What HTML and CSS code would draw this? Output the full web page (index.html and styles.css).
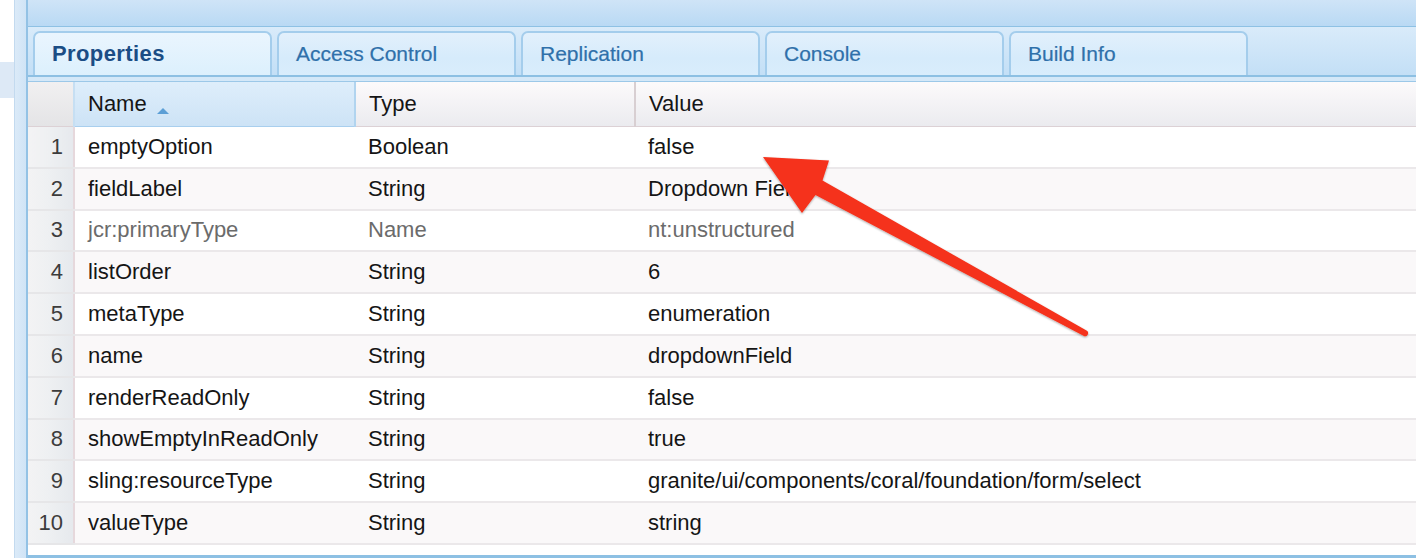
FILE: index.html
```html
<!DOCTYPE html>
<html>
<head>
<meta charset="utf-8">
<link rel="stylesheet" href="styles.css">
</head>
<body>
<div class="page">
  <div class="side"><div class="side-sel"></div></div>
  <div class="frame"></div>
  <div class="main">
    <div class="topbar"></div>
    <div class="tabstrip">
      <div class="tab active">Properties</div>
      <div class="tab">Access Control</div>
      <div class="tab">Replication</div>
      <div class="tab">Console</div>
      <div class="tab">Build Info</div>
    </div>
    <div class="tabbase"></div>
    <div class="gridwrap">
      <table class="grid">
        <thead>
          <tr>
            <th class="num"></th>
            <th class="c-name sorted">Name <span class="sort-up"></span></th>
            <th class="c-type">Type</th>
            <th class="c-value">Value</th>
          </tr>
        </thead>
        <tbody>
          <tr><td class="num">1</td><td>emptyOption</td><td>Boolean</td><td>false</td></tr>
          <tr class="alt"><td class="num">2</td><td>fieldLabel</td><td>String</td><td>Dropdown Field</td></tr>
          <tr class="prot"><td class="num">3</td><td>jcr:primaryType</td><td>Name</td><td>nt:unstructured</td></tr>
          <tr class="alt"><td class="num">4</td><td>listOrder</td><td>String</td><td>6</td></tr>
          <tr><td class="num">5</td><td>metaType</td><td>String</td><td>enumeration</td></tr>
          <tr class="alt"><td class="num">6</td><td>name</td><td>String</td><td>dropdownField</td></tr>
          <tr><td class="num">7</td><td>renderReadOnly</td><td>String</td><td>false</td></tr>
          <tr class="alt"><td class="num">8</td><td>showEmptyInReadOnly</td><td>String</td><td>true</td></tr>
          <tr><td class="num">9</td><td>sling:resourceType</td><td>String</td><td>granite/ui/components/coral/foundation/form/select</td></tr>
          <tr class="alt"><td class="num">10</td><td>valueType</td><td>String</td><td>string</td></tr>
        </tbody>
      </table>
    </div>
  </div>
  <svg class="annot" width="1416" height="558" viewBox="0 0 1416 558" xmlns="http://www.w3.org/2000/svg">
    <defs>
      <filter id="sh" x="-10%" y="-10%" width="120%" height="120%">
        <feGaussianBlur in="SourceAlpha" stdDeviation="1.2"/>
        <feOffset dx="0" dy="1" result="b"/>
        <feComponentTransfer><feFuncA type="linear" slope="0.35"/></feComponentTransfer>
        <feMerge><feMergeNode/><feMergeNode in="SourceGraphic"/></feMerge>
      </filter>
    </defs>
    <path filter="url(#sh)" fill="#f5301a" d="M763 157 L829 160.5 L822.5 180.5 L1086.5 330.5 A3 3 0 0 1 1083.5 335.8 L815.5 195 L802 213 Z"/>
  </svg>
</div>
</body>
</html>
```

FILE: styles.css
```css
html, body {
  margin: 0;
  padding: 0;
  background: #ffffff;
}
body {
  font-family: "Liberation Sans", Arial, sans-serif;
  overflow: hidden;
}
.page {
  position: relative;
  display: flex;
  width: 1416px;
  height: 558px;
}
.side {
  width: 14px;
  flex: none;
  background: #ffffff;
}
.side-sel {
  margin-top: 62px;
  height: 36px;
  background: #dde9f6;
}
.frame {
  width: 11px;
  flex: none;
  border-left: 1px solid #c3daef;
  border-right: 2px solid #93c2e5;
  background: linear-gradient(90deg, #dbeaf8, #d0e4f6);
}
.main {
  flex: 1;
  display: flex;
  flex-direction: column;
  min-width: 0;
}
.topbar {
  height: 26px;
  flex: none;
  background: linear-gradient(#cfe4f7, #b9d9f4);
  border-bottom: 1px solid #8ec1e4;
}
.tabstrip {
  height: 44px;
  flex: none;
  padding: 4px 0 0 5px;
  display: flex;
  gap: 5.5px;
  background: linear-gradient(#d9ebfa, #c3dff6);
}
.tab {
  box-sizing: border-box;
  width: 238.5px;
  height: 44px;
  border: 2px solid #a4cdec;
  border-bottom: none;
  border-radius: 7px 7px 0 0;
  background: linear-gradient(#e2f0fc, #d6ebfb 60%, #d9edfc);
  color: #2f70aa;
  font-family: "Liberation Sans", Arial, sans-serif;
  font-size: 21px;
  line-height: 41px;
  padding-left: 17px;
  -webkit-text-stroke: 0.2px #2f70aa;
}
.tab.active {
  background: linear-gradient(#eaf5fe, #dcf0fd);
  color: #1b4d85;
  font-weight: bold;
  font-size: 22px;
  letter-spacing: 0.4px;
  -webkit-text-stroke: 0;
}
.tabbase {
  flex: none;
  height: 4px;
  border-top: 2px solid #8dc0e3;
  border-bottom: 1px solid #9cc8e8;
  background: #d4e8f8;
}
.gridwrap {
  flex: 1;
  background: #ffffff;
  border-bottom: 3px solid #8dc0e3;
}
.grid {
  border-collapse: collapse;
  width: 100%;
  table-layout: fixed;
  font-size: 22px;
  color: #151515;
}
.grid th {
  height: 44px;
  padding: 0 0 0 13px;
  text-align: left;
  font-weight: normal;
  border-bottom: 1px solid #dcd1d5;
  background: linear-gradient(#fcfafb, #ebebef);
}
.grid th.num {
  width: 45px;
  padding: 0;
  background: linear-gradient(#f1f0f1, #e4e4e6);
  border-right: 1px solid #e1d7da;
}
.grid th.c-name {
  width: 266px;
}
.grid th.c-type {
  width: 265px;
  border-left: 2px solid #b1d4ef;
}
.grid th.c-value {
  border-left: 2px solid #d8cfd2;
}
.grid th.sorted {
  background: linear-gradient(#deeefb, #cde3f6);
  border-left: 2px solid #c6dff3;
  border-bottom: 1px solid #a9cfee;
}
.sort-up {
  display: inline-block;
  width: 0;
  height: 0;
  margin-left: 4px;
  vertical-align: -3px;
  border-left: 6px solid transparent;
  border-right: 6px solid transparent;
  border-bottom: 6px solid #5c9fd6;
}
.grid td {
  height: 39.8px;
  padding: 0 0 0 13px;
  border-bottom: 2px solid #ebe8ea;
  white-space: nowrap;
  overflow: hidden;
}
.grid tr.alt td {
  background: #faf8f9;
}
.grid td.num {
  padding: 0 10px 0 0;
  text-align: right;
  color: #3c3c3c;
  background: linear-gradient(90deg, #f3f3f4, #eef0f2 45%, #e6e9ed);
  border-right: 2px solid #e6d8dc;
  border-bottom: 2px solid #e6e6e8;
}
.grid tr.alt td.num {
  background: linear-gradient(90deg, #f3f3f4, #eef0f2 45%, #e6e9ed);
}
.grid tr.prot td {
  color: #6b6b6b;
}
.grid tr.prot td.num {
  color: #3c3c3c;
}
.annot {
  position: absolute;
  left: 0;
  top: 0;
  pointer-events: none;
}
```
